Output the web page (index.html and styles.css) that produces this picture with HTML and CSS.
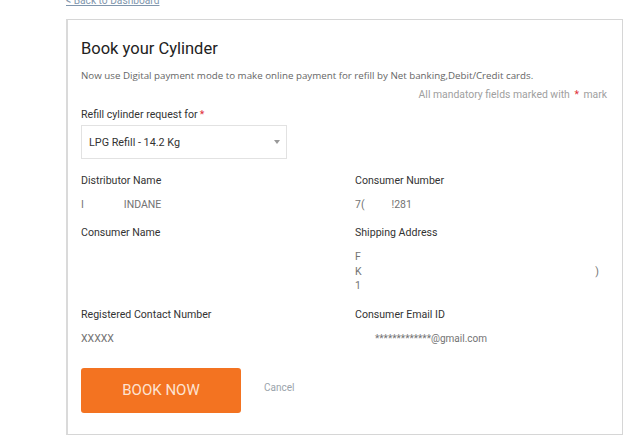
FILE: index.html
```html
<!DOCTYPE html>
<html>
<head>
<meta charset="utf-8">
<link rel="stylesheet" href="styles.css">
</head>
<body>
<div class="page">
  <div class="top"><a class="back" href="#">&lt; Back to Dashboard</a></div>
  <div class="card">
    <h1 class="title">Book your Cylinder</h1>
    <p class="subtitle">Now use Digital payment mode to make online payment for refill by Net banking,Debit/Credit cards.</p>
    <p class="mandatory">All mandatory fields marked with <span class="star">*</span> mark</p>
    <div class="label req">Refill cylinder request for<span class="star">*</span></div>
    <div class="select">
      <span>LPG Refill - 14.2 Kg</span>
      <span class="arrow"></span>
    </div>
    <div class="grid">
      <div class="field">
        <div class="label">Distributor Name</div>
        <div class="value">I<span class="gap-a"></span>INDANE</div>
      </div>
      <div class="field">
        <div class="label">Consumer Number</div>
        <div class="value">7(<span class="gap-b"></span>!281</div>
      </div>
      <div class="field">
        <div class="label">Consumer Name</div>
        <div class="value"></div>
      </div>
      <div class="field">
        <div class="label">Shipping Address</div>
        <div class="value address">
          <div>F</div>
          <div class="addr-row"><span>K</span><span>)</span></div>
          <div>1</div>
        </div>
      </div>
      <div class="field">
        <div class="label">Registered Contact Number</div>
        <div class="value">XXXXX</div>
      </div>
      <div class="field">
        <div class="label">Consumer Email ID</div>
        <div class="value email">*************@gmail.com</div>
      </div>
    </div>
    <div class="actions">
      <button class="book">BOOK NOW</button>
      <a class="cancel" href="#">Cancel</a>
    </div>
  </div>
</div>
</body>
</html>
```
FILE: styles.css
```css
* { box-sizing: border-box; }
html, body { margin: 0; padding: 0; background: #fff; }
body { font-family: Roboto, "Liberation Sans", sans-serif; color: #333; }
.page { padding-left: 66px; width: 623px; }
.top { height: 19px; display: flow-root; }
.back {
  display: block;
  margin-top: -5px;
  font-size: 10.2px;
  line-height: 12px;
  color: #8096ad;
  text-decoration: underline;
}
.card {
  border: 1px solid #d6d6d6;
  border-left: 2px solid #dadada;
  width: 557px;
  height: 416px;
  padding: 18px 15px 0 13px;
}
.title {
  margin: 0;
  font-size: 16.5px;
  line-height: 22px;
  font-weight: 400;
  color: #222;
}
.subtitle {
  margin: 9px 0 0;
  font-family: "Open Sans", sans-serif;
  font-size: 9.75px;
  line-height: 14px;
  color: #666;
}
.mandatory {
  margin: 5px 0 0;
  text-align: right;
  font-size: 10.4px;
  line-height: 14px;
  color: #a0a0a0;
}
.star { color: #e0303a; margin-left: 2px; margin-right: 2px; }
.label {
  font-size: 10.6px;
  line-height: 14px;
  color: #333;
}
.req { margin-top: 6px; }
.select {
  margin-top: 3px;
  width: 206px;
  height: 34px;
  border: 1px solid #e2e2e2;
  display: flex;
  align-items: center;
  justify-content: space-between;
  padding: 0 6px 0 7px;
  font-size: 10.8px;
  color: #333;
}
.arrow {
  width: 0; height: 0;
  border-left: 3px solid transparent;
  border-right: 3px solid transparent;
  border-top: 4px solid #999;
}
.grid {
  margin-top: 15px;
  display: grid;
  grid-template-columns: 274px 1fr;
  row-gap: 14px;
}
.value {
  margin-top: 10px;
  font-size: 10.5px;
  line-height: 14px;
  color: #737373;
  min-height: 14px;
}
.gap-a { display: inline-block; width: 40px; }
.gap-b { display: inline-block; width: 27px; }
.address { line-height: 14.5px; }
.addr-row { display: flex; justify-content: space-between; padding-right: 8px; }
.email { padding-left: 20px; font-size: 10px; }
.actions {
  margin-top: 22px;
  display: flex;
  align-items: center;
  gap: 23px;
}
.book {
  width: 160px;
  height: 45px;
  border: 0;
  border-radius: 3px;
  background: #f37321;
  color: #fde3d2;
  font-family: Roboto, sans-serif;
  font-size: 15px;
  cursor: pointer;
}
.cancel {
  font-size: 10px;
  color: #9aa3ab;
  text-decoration: none;
  margin-top: -5px;
}
```
